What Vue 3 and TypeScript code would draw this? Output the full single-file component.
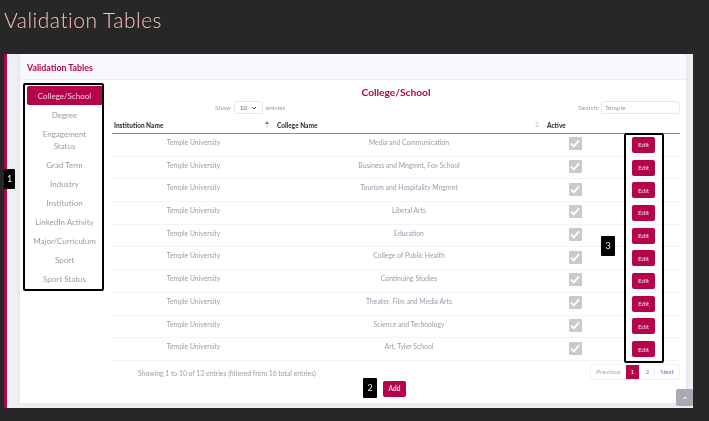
<script setup lang="ts">
const tables = ['College/School', 'Degree', 'Engagement Status', 'Grad Term', 'Industry', 'Institution', 'LinkedIn Activity', 'Major/Curriculum', 'Sport', 'Sport Status'];
const colleges = [
  'Media and Communication',
  'Business and Mngmnt, Fox School',
  'Tourism and Hospitality Mngmnt',
  'Liberal Arts',
  'Education',
  'College of Public Health',
  'Continuing Studies',
  'Theater, Film and Media Arts',
  'Science and Technology',
  'Art, Tyler School',
];
</script>

<template>
  <div class="page">
    <h1 class="page-title">Validation Tables</h1>
    <div class="frame">
      <div class="accent"></div>
      <div class="content">
        <section class="card">
          <header class="card-head">Validation Tables</header>
          <div class="card-body">
            <nav class="side">
              <a v-for="(t, i) in tables" :key="t" class="side-item" :class="{ on: i === 0 }">{{ t }}</a>
            </nav>
            <div class="main">
              <h2 class="main-title">College/School</h2>
              <div class="tools">
                <div class="show">
                  Show
                  <span class="select">10
                    <svg width="6" height="4" viewBox="0 0 6 4"><path d="M1 1l2 2 2-2" fill="none" stroke="#555" stroke-width="1" /></svg>
                  </span>
                  entries
                </div>
                <div class="search">Search: <span class="search-box">Temple</span></div>
              </div>
              <table class="grid">
                <thead>
                  <tr>
                    <th class="c1">Institution Name<span class="sort"><i class="up"></i><i class="down"></i></span></th>
                    <th class="c2">College Name<span class="sort faint"><i class="up"></i><i class="down"></i></span></th>
                    <th class="c3">Active</th>
                    <th class="c4"></th>
                  </tr>
                </thead>
                <tbody>
                  <tr v-for="c in colleges" :key="c">
                    <td>Temple University</td>
                    <td class="college">{{ c }}</td>
                    <td class="mid">
                      <span class="check">
                        <svg width="10" height="9" viewBox="0 0 10 9"><path d="M1 4.6l2.8 2.8L9 1.4" fill="none" stroke="#fff" stroke-width="1.8" /></svg>
                      </span>
                    </td>
                    <td class="mid"><button class="btn">Edit</button></td>
                  </tr>
                </tbody>
              </table>
              <div class="foot">
                <div class="info">Showing 1 to 10 of 13 entries (filtered from 16 total entries)</div>
                <div class="add-wrap"><button class="btn">Add</button></div>
                <div class="pager">
                  <span class="pg muted">Previous</span>
                  <span class="pg cur">1</span>
                  <span class="pg">2</span>
                  <span class="pg">Next</span>
                </div>
              </div>
            </div>
          </div>
        </section>
      </div>

      <!-- annotation callouts laid over the screenshot -->
      <div class="mark box-side"></div>
      <div class="mark box-edit"></div>
      <span class="tag tag-1">1</span>
      <span class="tag tag-2">2</span>
      <span class="tag tag-3">3</span>
      <span class="to-top">
        <svg width="6" height="4" viewBox="0 0 6 4"><path d="M1 3l2-2 2 2" fill="none" stroke="#fff" stroke-width="1" /></svg>
      </span>
    </div>
  </div>
</template>

<style scoped>
.page {
  width: 709px;
  height: 421px;
  overflow: hidden;
  background: #272727;
  font-family: Lato, "Noto Sans", sans-serif;
  box-sizing: border-box;
  padding: 8px 16px 0 4px;
  filter: blur(0.3px);
}
.page-title {
  margin: 0;
  height: 46px;
  font-size: 21px;
  line-height: 24px;
  font-weight: 300;
  letter-spacing: 0.5px;
  color: #ffc2bc;
}
.frame {
  position: relative;
  display: flex;
  width: 689px;
  height: 354px;
  background: #eeeff5;
}
.accent {
  width: 3px;
  background: #b5044a;
}
.content {
  flex: 1;
  padding: 0 7px 5px 13px;
  display: flex;
}
.card {
  flex: 1;
  background: #fff;
  display: flex;
  flex-direction: column;
  box-shadow: 0 0 4px rgba(60, 60, 90, 0.08);
}
.card-head {
  height: 25px;
  line-height: 27px;
  padding-left: 7px;
  background: #f8f9fc;
  border-bottom: 1px solid #eceef4;
  font-size: 8.8px;
  font-weight: 700;
  color: #b5044a;
}
.card-body {
  flex: 1;
  display: flex;
  padding: 6px 6px 0 7px;
}
.side {
  width: 75px;
  flex: none;
  display: flex;
  flex-direction: column;
  align-items: stretch;
}
.side-item {
  padding: 3.5px 5px;
  line-height: 12px;
  text-align: center;
  font-size: 8px;
  color: #9a9cab;
}
.side-item.on {
  background: #b5044a;
  color: #f5dbe5;
  border-radius: 2px 0 0 2px;
}
.main {
  flex: 1;
  margin-left: 10px;
  min-width: 0;
}
.main-title {
  margin: 0;
  height: 14px;
  line-height: 12px;
  text-align: center;
  font-size: 10.2px;
  font-weight: 700;
  color: #b5044a;
}
.tools {
  display: flex;
  justify-content: space-between;
  align-items: center;
  height: 15px;
  font-size: 6.5px;
  color: #9a9cab;
}
.show {
  margin-left: 103px;
  display: flex;
  align-items: center;
  gap: 3px;
}
.select {
  display: inline-flex;
  align-items: center;
  justify-content: space-between;
  box-sizing: border-box;
  width: 29px;
  height: 13px;
  padding: 0 5px;
  color: #666;
  background: #fff;
  border: 1px solid #e6e8f0;
  border-radius: 3px;
}
.search {
  display: flex;
  align-items: center;
  gap: 2px;
}
.search-box {
  box-sizing: border-box;
  width: 79px;
  height: 13px;
  line-height: 11px;
  padding-left: 3px;
  background: #fff;
  border: 1px solid #e6e8f0;
  border-radius: 3px;
}
.grid {
  width: 568px;
  table-layout: fixed;
  border-collapse: collapse;
  margin-top: 2px;
}
th {
  position: relative;
  height: 16px;
  padding: 0 0 0 2px;
  text-align: left;
  font-size: 6.5px;
  font-weight: 900;
  color: #33343c;
  border-bottom: 1px solid #8a8a8a;
}
.c1 { width: 161px; }
.c2 { width: 268px; }
.c3 { width: 60px; }
.sort {
  position: absolute;
  right: 6px;
  top: 4px;
  display: flex;
  flex-direction: column;
  gap: 1px;
}
.sort i {
  display: block;
  width: 0;
  height: 0;
  border-left: 2px solid transparent;
  border-right: 2px solid transparent;
}
.sort .up { border-bottom: 3px solid #777; }
.sort .down { border-top: 3px solid #ddd; }
.sort.faint .up { border-bottom-color: #ddd; }
td {
  padding: 4px 0 0;
  height: 17.7px;
  text-align: center;
  vertical-align: top;
  font-size: 6.8px;
  line-height: 8px;
  color: #9a9cab;
  border-bottom: 1px solid #f3f4f9;
}
td.college { padding-right: 2px; }
td.mid {
  padding: 0;
  height: 21.7px;
  vertical-align: middle;
}
.check {
  display: inline-flex;
  align-items: center;
  justify-content: center;
  width: 13px;
  height: 13px;
  margin: 0 2px 2px 0;
  border-radius: 1px;
  background: #c9c9ce;
  vertical-align: middle;
}
.btn {
  display: inline-block;
  width: 23px;
  height: 16px;
  padding: 0;
  border: none;
  border-radius: 2px;
  background: #b5044a;
  color: #f5dbe5;
  font-family: inherit;
  font-size: 6.5px;
  vertical-align: middle;
}
.foot {
  position: relative;
  display: flex;
  justify-content: space-between;
  height: 40px;
}
.info {
  margin: 8px 0 0 26px;
  font-size: 6.8px;
  line-height: 9px;
  color: #9a9cab;
}
.add-wrap {
  position: absolute;
  left: 271px;
  top: 16px;
}
.add-wrap .btn {
  font-weight: 700;
}
.pager {
  display: flex;
  margin-top: 3px;
  font-size: 6.5px;
  color: #5c7ee0;
  background: #fff;
  border: 1px solid #f0f1f6;
  border-radius: 2px;
  box-sizing: border-box;
  height: 16px;
}
.pg {
  line-height: 14px;
  padding: 0 5px;
  border-left: 1px solid #f0f1f6;
}
.pg:first-child { border-left: none; }
.pg.muted { color: #a7a9b5; }
.pg.cur {
  background: #b5044a;
  color: #fff;
  border-left: none;
}
.mark {
  position: absolute;
  box-sizing: border-box;
  border: 2px solid #000;
  border-radius: 2px;
}
.box-side {
  left: 19px;
  top: 29px;
  width: 81px;
  height: 208px;
}
.box-edit {
  left: 620px;
  top: 79px;
  width: 40px;
  height: 230px;
}
.tag {
  position: absolute;
  width: 14px;
  height: 20px;
  line-height: 20px;
  text-align: center;
  background: #000;
  color: #eee;
  font-size: 9px;
  border-radius: 1px;
}
.tag-1 { left: 0; top: 115px; width: 11px; }
.tag-2 { left: 359px; top: 324px; }
.tag-3 { left: 597px; top: 182px; }
.to-top {
  position: absolute;
  left: 672px;
  top: 335px;
  width: 17px;
  height: 17px;
  display: flex;
  align-items: center;
  justify-content: center;
  background: #a9abb2;
  border-radius: 2px;
}
</style>

<style>
html, body { margin: 0; background: #272727; }
</style>
